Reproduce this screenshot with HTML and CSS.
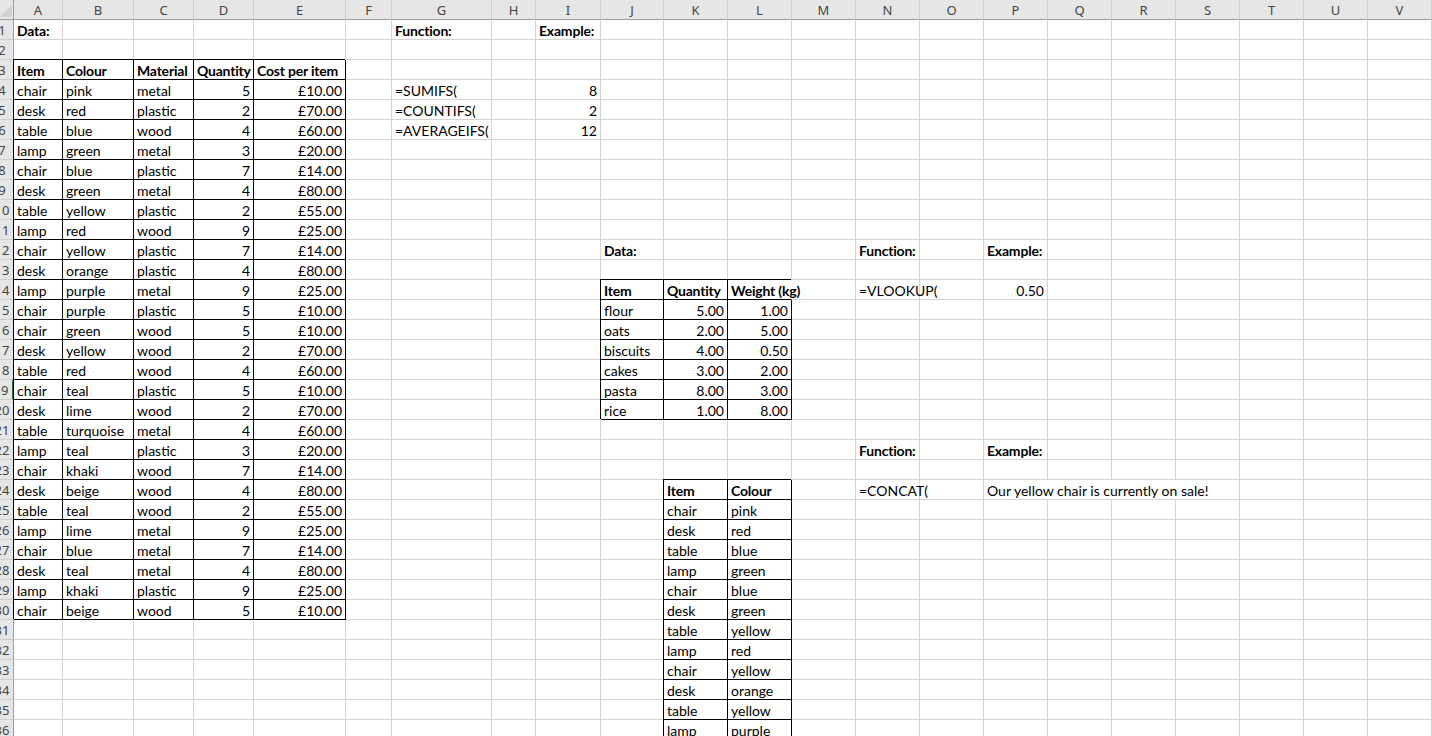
FILE: index.html
```html
<!DOCTYPE html>
<html lang="en">
<head>
    <meta charset="UTF-8">
    <meta name="viewport" content="width=device-width, initial-scale=1.0">
    <title>Excel functions</title>
    <link rel="stylesheet" href="styles.css">
</head>
<body>
    <div class="sheet" id="sheet">
        <div class="corner">
            <svg width="14" height="20" viewBox="0 0 14 20"><polygon points="12,5 12,17 0,17" fill="#d2d2d2"/></svg>
        </div>
        <!-- column headers, row headers and cells are generated below -->
    </div>

    <script>
        const cols = 'ABCDEFGHIJKLMNOPQRSTUV';
        const rowCount = 36;
        const activeRow = 19;
        const sheet = document.getElementById('sheet');

        let cells = {};

        function set(ref, text, cls) {
            cells[ref] = { text: text, cls: cls || '' };
        }

        // a bordered table: first row is the bold header
        function block(startCol, startRow, rows, numCols) {
            let c0 = cols.indexOf(startCol);
            rows.forEach((row, i) => {
                row.forEach((value, j) => {
                    let classes = ['box'];
                    if (i === 0) classes.push('bold');
                    if (i > 0 && numCols.includes(j)) classes.push('num');
                    cells[cols[c0 + j] + (startRow + i)] = { text: value, cls: classes.join(' ') };
                });
            });
        }

        block('A', 3, [
            ['Item', 'Colour', 'Material', 'Quantity', 'Cost per item'],
            ['chair', 'pink', 'metal', '5', '£10.00'],
            ['desk', 'red', 'plastic', '2', '£70.00'],
            ['table', 'blue', 'wood', '4', '£60.00'],
            ['lamp', 'green', 'metal', '3', '£20.00'],
            ['chair', 'blue', 'plastic', '7', '£14.00'],
            ['desk', 'green', 'metal', '4', '£80.00'],
            ['table', 'yellow', 'plastic', '2', '£55.00'],
            ['lamp', 'red', 'wood', '9', '£25.00'],
            ['chair', 'yellow', 'plastic', '7', '£14.00'],
            ['desk', 'orange', 'plastic', '4', '£80.00'],
            ['lamp', 'purple', 'metal', '9', '£25.00'],
            ['chair', 'purple', 'plastic', '5', '£10.00'],
            ['chair', 'green', 'wood', '5', '£10.00'],
            ['desk', 'yellow', 'wood', '2', '£70.00'],
            ['table', 'red', 'wood', '4', '£60.00'],
            ['chair', 'teal', 'plastic', '5', '£10.00'],
            ['desk', 'lime', 'wood', '2', '£70.00'],
            ['table', 'turquoise', 'metal', '4', '£60.00'],
            ['lamp', 'teal', 'plastic', '3', '£20.00'],
            ['chair', 'khaki', 'wood', '7', '£14.00'],
            ['desk', 'beige', 'wood', '4', '£80.00'],
            ['table', 'teal', 'wood', '2', '£55.00'],
            ['lamp', 'lime', 'metal', '9', '£25.00'],
            ['chair', 'blue', 'metal', '7', '£14.00'],
            ['desk', 'teal', 'metal', '4', '£80.00'],
            ['lamp', 'khaki', 'plastic', '9', '£25.00'],
            ['chair', 'beige', 'wood', '5', '£10.00']
        ], [3, 4]);

        block('J', 14, [
            ['Item', 'Quantity', 'Weight (kg)'],
            ['flour', '5.00', '1.00'],
            ['oats', '2.00', '5.00'],
            ['biscuits', '4.00', '0.50'],
            ['cakes', '3.00', '2.00'],
            ['pasta', '8.00', '3.00'],
            ['rice', '1.00', '8.00']
        ], [1, 2]);

        block('K', 24, [
            ['Item', 'Colour'],
            ['chair', 'pink'],
            ['desk', 'red'],
            ['table', 'blue'],
            ['lamp', 'green'],
            ['chair', 'blue'],
            ['desk', 'green'],
            ['table', 'yellow'],
            ['lamp', 'red'],
            ['chair', 'yellow'],
            ['desk', 'orange'],
            ['table', 'yellow'],
            ['lamp', 'purple']
        ], []);

        set('A1', 'Data:', 'bold');
        set('G1', 'Function:', 'bold');
        set('I1', 'Example:', 'bold');
        set('G4', '=SUMIFS(');
        set('G5', '=COUNTIFS(');
        set('G6', '=AVERAGEIFS(');
        set('I4', '8', 'num');
        set('I5', '2', 'num');
        set('I6', '12', 'num');

        set('J12', 'Data:', 'bold');
        set('N12', 'Function:', 'bold');
        set('P12', 'Example:', 'bold');
        set('N14', '=VLOOKUP(');
        set('P14', '0.50', 'num');

        set('N22', 'Function:', 'bold');
        set('P22', 'Example:', 'bold');
        set('N24', '=CONCAT(');
        set('P24', 'Our yellow chair is currently on sale!', 'open');
        set('Q24', '', 'open');
        set('R24', '', 'open');

        // text spilling over the right edge hides that gridline
        cells['L14'].cls += ' open';

        function el(cls, text) {
            let div = document.createElement('div');
            div.className = cls;
            if (text) div.textContent = text;
            return div;
        }

        for (let c of cols) {
            sheet.appendChild(el('colhead', c));
        }

        for (let r = 1; r <= rowCount; r++) {
            let head = el('rowhead' + (r === activeRow ? ' active' : ''));
            head.innerHTML = `<span>${r}</span>`;
            sheet.appendChild(head);

            for (let c of cols) {
                let data = cells[c + r];
                let cell = el('cell' + (data && data.cls ? ' ' + data.cls : ''), data ? data.text : '');
                sheet.appendChild(cell);
            }
        }
    </script>
</body>
</html>
```

FILE: styles.css
```css
:root {
    --grid-color: #d4d4d4;
    --head-bg: #e6e6e6;
    --head-line: #9f9f9f;
    --head-text: #444444;
    --active-color: #217346;
}

body {
    margin: 0;
    padding: 0;
    background: white;
    overflow: hidden;
    font-family: Lato, "Liberation Sans", sans-serif;
    font-size: 14px;
    color: black;
}

.sheet {
    display: grid;
    grid-template-columns: 14px 49px 71px 60px 60px 92px 46px 100px 44px 65px 63px repeat(12, 64px);
    grid-auto-rows: 20px;
    width: 1432px;
}

.corner {
    background: var(--head-bg);
    border-right: 1px solid var(--head-line);
    border-bottom: 1px solid var(--head-line);
    box-sizing: border-box;
    overflow: hidden;
}

.corner svg {
    display: block;
}

.colhead {
    background: var(--head-bg);
    border-right: 1px solid #cfcfcf;
    border-bottom: 1px solid var(--head-line);
    box-sizing: border-box;
    text-align: center;
    font-family: "Noto Sans", "Open Sans", sans-serif;
    font-size: 13px;
    line-height: 20px;
    color: var(--head-text);
}

.rowhead {
    background: var(--head-bg);
    border-right: 1px solid var(--head-line);
    border-bottom: 1px solid #cfcfcf;
    box-sizing: border-box;
    overflow: hidden;
    display: flex;
    justify-content: flex-end;
    font-family: "Noto Sans", "Open Sans", sans-serif;
    font-size: 13px;
    line-height: 20px;
    color: var(--head-text);
}

.rowhead span {
    flex-shrink: 0;
    width: 22px;
    text-align: center;
}

.rowhead.active {
    border-right: 2px solid var(--active-color);
}

.cell {
    border-right: 1px solid var(--grid-color);
    border-bottom: 1px solid var(--grid-color);
    box-sizing: border-box;
    padding: 0 3px;
    white-space: nowrap;
    line-height: 22px;
}

.cell.num {
    text-align: right;
}

.cell.bold {
    font-weight: bold;
    letter-spacing: -0.2px;
}

.cell.box {
    border-right-color: black;
    border-bottom-color: black;
    box-shadow: -1px -1px 0 black;
}

.cell.open {
    border-right-color: transparent;
}
```
